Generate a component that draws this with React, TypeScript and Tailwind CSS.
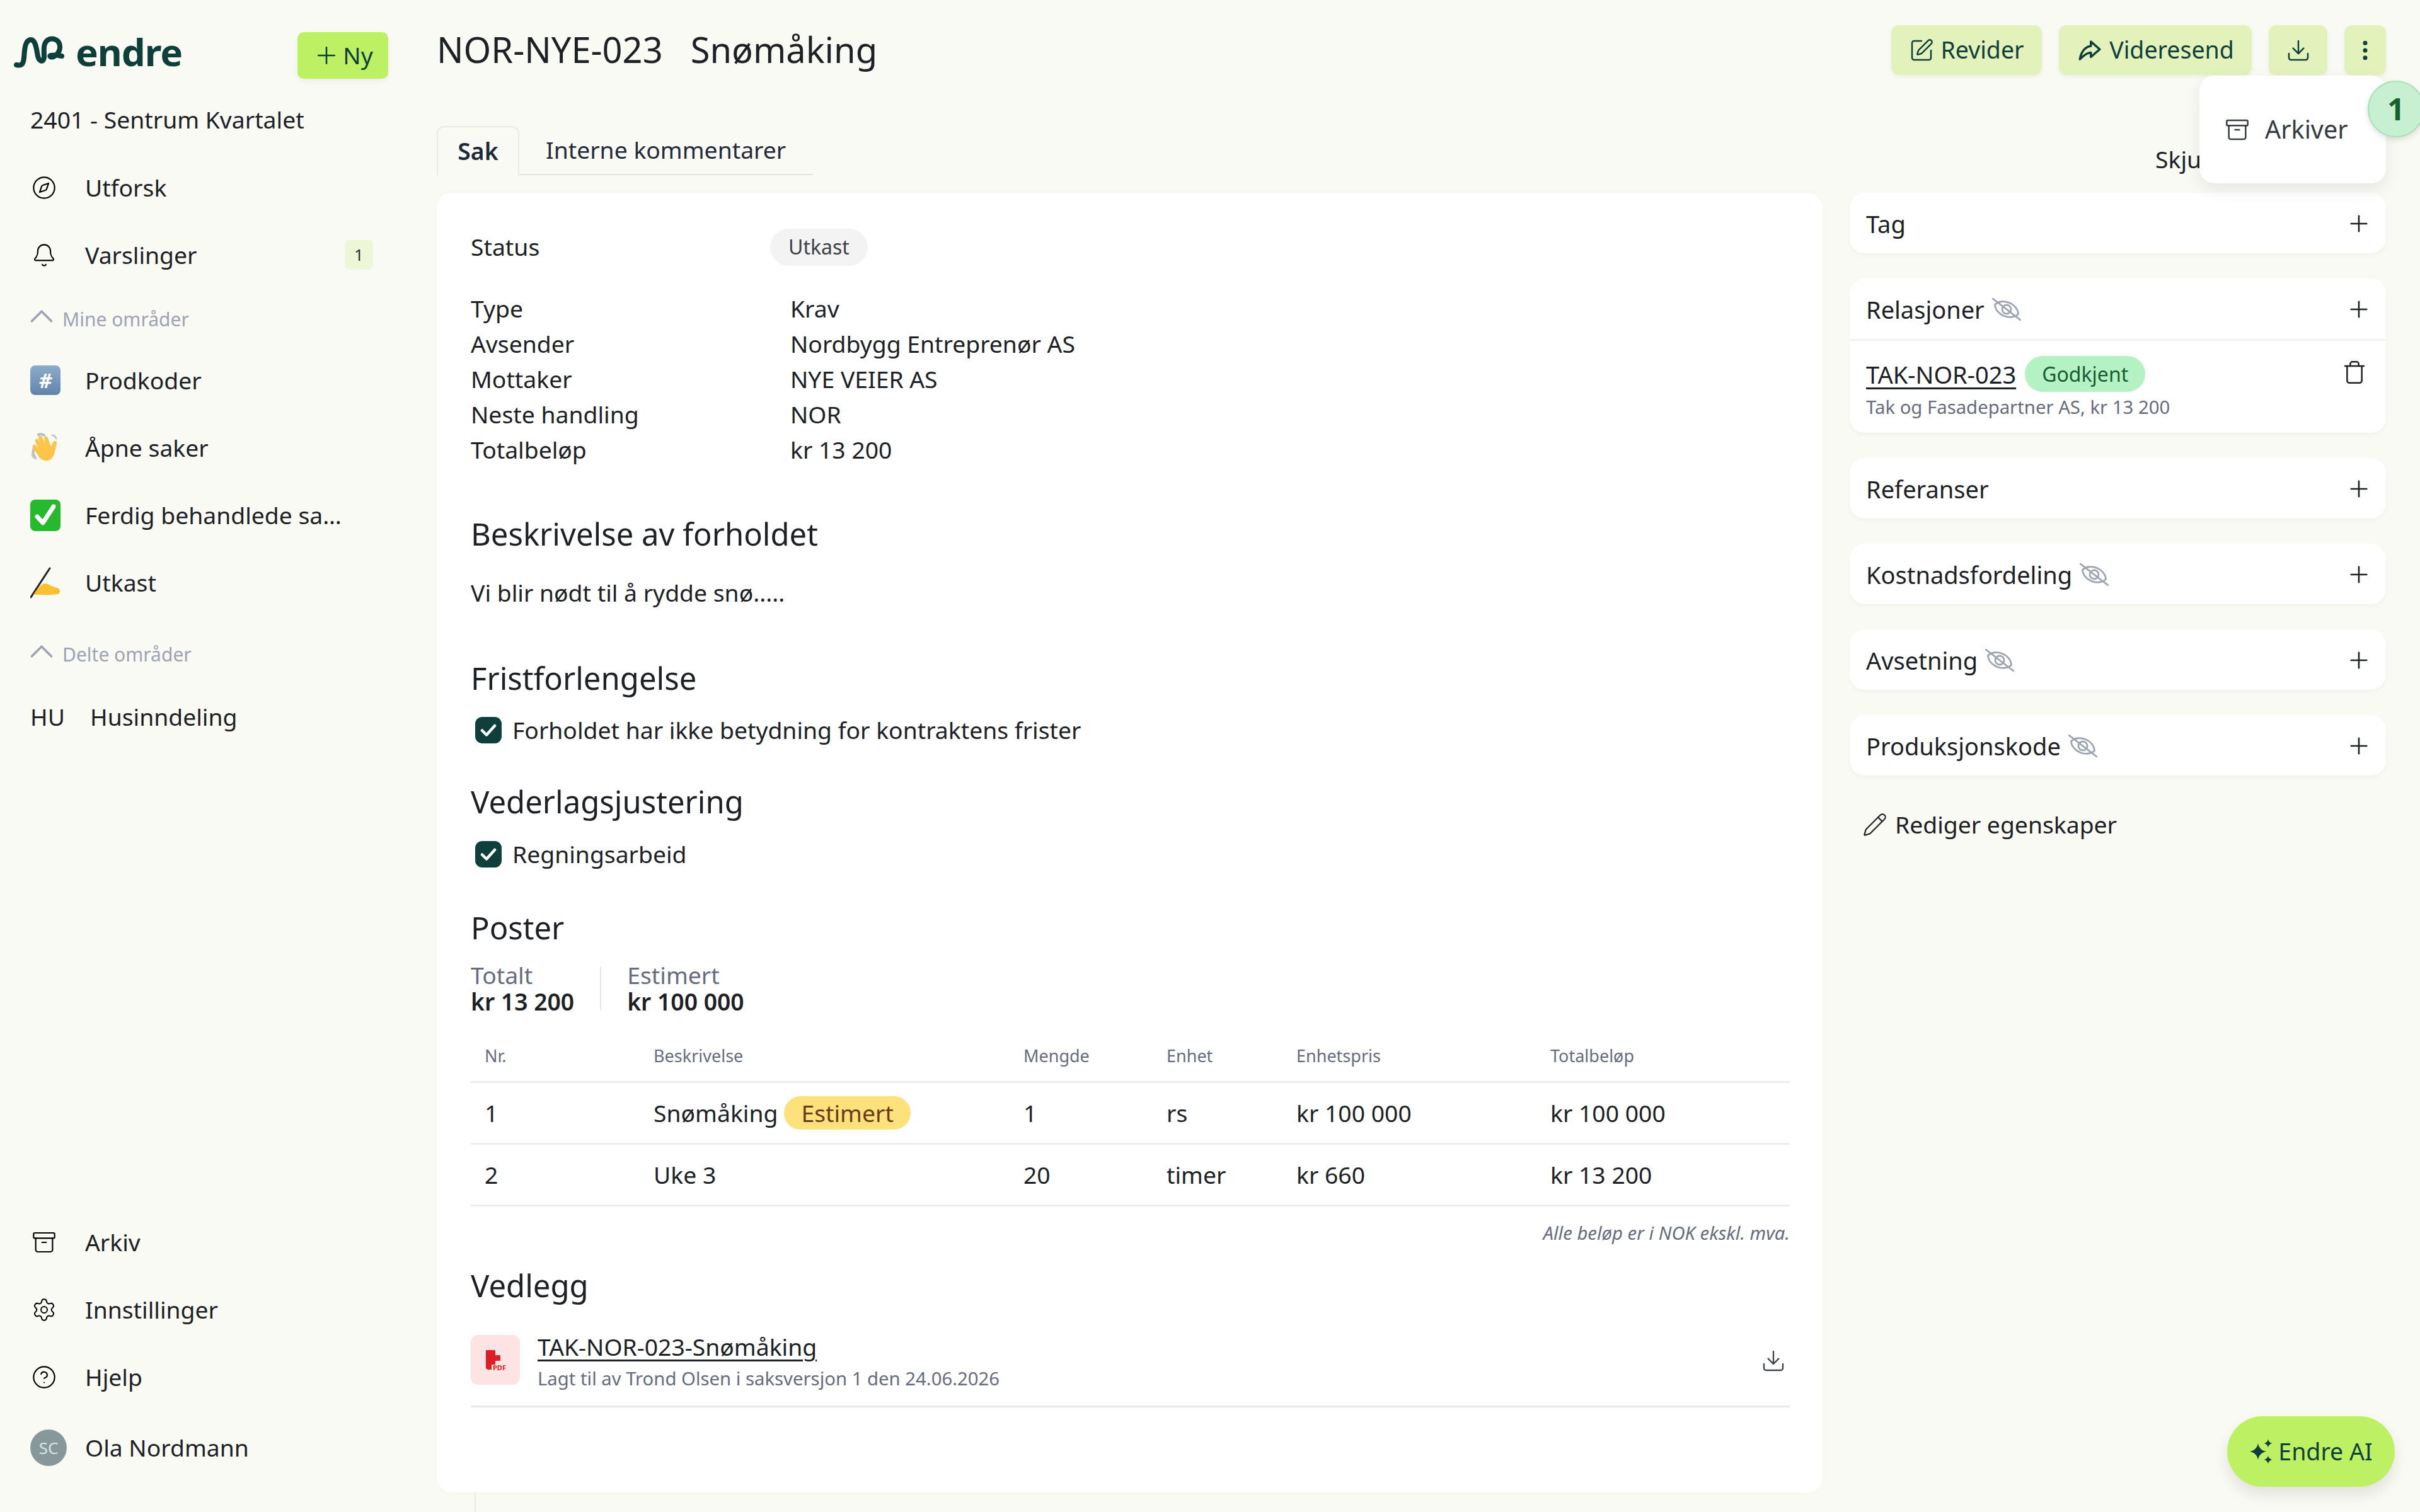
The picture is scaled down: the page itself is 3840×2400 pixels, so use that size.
import { Archive, Bell, ChevronUp, CircleHelp, Compass, Download, EllipsisVertical, Pencil, Plus, Settings, SquarePen, Trash } from "lucide-react";
import { TbShare3 } from "react-icons/tb";

const fontStack = "[font-family:'Noto_Sans',sans-serif]";

function Logo() {
  return (
    <div className="flex items-center gap-[18px] pl-[22px]">
      <svg width="80" height="56" viewBox="0 0 80 56" fill="none">
        <path
          d="M4 47C12 49 15 46 16 36C17 24 17 9 26 7C35 6 36 24 38 33C40 42 47 44 48 35C48 24 46 14 53 8C60 3 72 6 73 17C74 28 63 37 58 34C54 31 66 31 76 33"
          stroke="#0f3f3b"
          strokeWidth="8"
          strokeLinecap="round"
          strokeLinejoin="round"
        />
      </svg>
      <span className="-mt-[4px] text-[60px] leading-none font-bold tracking-[-1px] text-[#0f3f3b]">endre</span>
    </div>
  );
}

function HashEmoji() {
  return (
    <span className="flex h-[47px] w-[48px] items-center justify-center rounded-[8px] bg-gradient-to-b from-[#8daccb] to-[#5f84ac] text-[32px] leading-none font-bold italic text-white">
      #
    </span>
  );
}

function WaveEmoji() {
  return (
    <svg width="48" height="50" viewBox="0 0 48 50" fill="none">
      <path d="M6 26c-2 4-2 9 1 13M13 4c3-1 6-1 9 1" stroke="#b9bcc0" strokeWidth="4" strokeLinecap="round" />
      <path d="M35 5c3 0 5 2 6 5M3 36c1 3 3 5 6 6" stroke="#c4c7ca" strokeWidth="3" strokeLinecap="round" />
      <path
        d="M13 26 8 15c-1-4 3-6 5-3l3 6-3-8c-1-4 4-6 6-2l5 11-2-9c-1-4 4-5 6-1l5 14 3-7c2-4 7-2 6 2l-3 13c-2 10-8 16-16 14-6-1-9-5-12-10l-7-10c-2-4 3-7 6-3z"
        fill="#fcc44a"
      />
    </svg>
  );
}

function CheckEmoji() {
  return (
    <svg width="48" height="50" viewBox="0 0 48 50">
      <rect width="48" height="50" rx="8" fill="#27b92d" />
      <path d="M11 27 20 37 37 11" stroke="#fff" strokeWidth="7" fill="none" strokeLinecap="round" strokeLinejoin="round" />
    </svg>
  );
}

function WriteEmoji() {
  return (
    <svg width="48" height="50" viewBox="0 0 48 50" fill="none">
      <path d="M1 48 31 2" stroke="#222" strokeWidth="3" strokeLinecap="round" />
      <path d="M5 44c4-7 9-13 15-17 5-2 9 0 13 3 5 2 9 2 13 5 2 3 1 7-2 8-9 1-18 2-27 1-4 0-8 0-12 0z" fill="#fbc02d" />
    </svg>
  );
}

function HiddenIcon() {
  return (
    <svg width="46" height="36" viewBox="0 0 46 36" fill="none" stroke="#9ea5b0" strokeWidth="2.8" strokeLinecap="round">
      <g transform="rotate(22 23 18)">
        <path d="M3 18C10 3 36 3 43 18C36 33 10 33 3 18Z" />
        <circle cx="23" cy="18" r="7" />
      </g>
      <path d="M1 1 45 35" />
    </svg>
  );
}

function SidebarLink({ icon, label, badge }: { icon: React.ReactNode; label: string; badge?: string }) {
  return (
    <div className="flex h-[107px] items-center pl-[48px] pr-[101px]">
      <span className="flex w-[87px] shrink-0 items-center">{icon}</span>
      <span className="max-w-[409px] truncate text-[37.3px] leading-[54px] text-[#1d2126]">{label}</span>
      {badge && (
        <span className="ml-auto flex h-[47px] w-[45px] items-center justify-center rounded-[8px] bg-[#eef6d8] text-[26px] text-[#27302a]">
          {badge}
        </span>
      )}
    </div>
  );
}

function SectionLabel({ label }: { label: string }) {
  return (
    <div className="flex items-center gap-[2px] pl-[35px] text-[30px] leading-none text-[#9ea3b3]">
      <ChevronUp size={62} strokeWidth={1.4} className="-my-[10px] -mt-[20px]" />
      <span>{label}</span>
    </div>
  );
}

function Sidebar() {
  return (
    <aside className="flex w-[693px] shrink-0 flex-col">
      <div className="flex items-start justify-between pt-[51px] pr-[77px]">
        <div className="pt-[5px]"><Logo /></div>
        <button className="flex h-[74px] w-[144px] items-center justify-center gap-[4px] rounded-[10px] bg-[#bdf163] text-[37.3px] text-[#0f3f3b] shadow-[0_4px_10px_rgba(0,0,0,0.05)]">
          <Plus size={44} strokeWidth={1.4} />
          Ny
        </button>
      </div>
      <div className="mt-[38px] pl-[48px] text-[37.3px] leading-[54px] text-[#1d2126]">2401 - Sentrum Kvartalet</div>
      <div className="mt-[27px]">
        <SidebarLink icon={<Compass size={40} strokeWidth={1.3} className="ml-[2px]" />} label="Utforsk" />
        <SidebarLink icon={<Bell size={40} strokeWidth={1.3} className="ml-[2px]" />} label="Varslinger" badge="1" />
      </div>
      <div className="mt-[33px] h-[48px]">
        <SectionLabel label="Mine områder" />
      </div>
      <div className="mt-[11px]">
        <SidebarLink icon={<HashEmoji />} label="Prodkoder" />
        <SidebarLink icon={<WaveEmoji />} label="Åpne saker" />
        <SidebarLink icon={<CheckEmoji />} label="Ferdig behandlede saker" />
        <SidebarLink icon={<WriteEmoji />} label="Utkast" />
      </div>
      <div className="mt-[45px] h-[48px]">
        <SectionLabel label="Delte områder" />
      </div>
      <div className="mt-[28px] flex h-[78px] items-center pl-[48px] text-[37.3px] leading-none text-[#1d2126]">
        <span className="w-[95px]">HU</span>
        <span>Husinndeling</span>
      </div>
      <div className="mt-auto pb-[43px]">
        <SidebarLink icon={<Archive size={40} strokeWidth={1.3} className="ml-[2px]" />} label="Arkiv" />
        <SidebarLink icon={<Settings size={40} strokeWidth={1.2} className="ml-[2px]" />} label="Innstillinger" />
        <SidebarLink icon={<CircleHelp size={40} strokeWidth={1.3} className="ml-[2px]" />} label="Hjelp" />
        <div className="flex h-[118px] items-center pl-[48px]">
          <span className="flex h-[58px] w-[58px] items-center justify-center rounded-full bg-[#87989a] text-[26px] text-[#d9e2e2]">SC</span>
          <span className="ml-[29px] text-[37.3px] leading-none text-[#1d2126]">Ola Nordmann</span>
        </div>
      </div>
    </aside>
  );
}

function ActionButton({ children, className }: { children: React.ReactNode; className: string }) {
  return (
    <button className={`flex h-[79px] items-center justify-center gap-[10px] rounded-[12px] bg-[#e3f1ba] text-[37.5px] text-[#0f3f3b] shadow-[0_3px_8px_rgba(0,0,0,0.05)] ${className}`}>
      {children}
    </button>
  );
}

function InfoRow({ label, value }: { label: string; value: string }) {
  return (
    <div className="flex h-[56px] items-center text-[37.3px] leading-none text-[#1d2126]">
      <span className="w-[507px]">{label}</span>
      <span>{value}</span>
    </div>
  );
}

function SectionTitle({ children, className }: { children: React.ReactNode; className: string }) {
  return <h2 className={`text-[49px] leading-[66px] font-normal text-[#1d2126] ${className}`}>{children}</h2>;
}

function CheckRow({ label, className }: { label: string; className: string }) {
  return (
    <div className={`flex items-center gap-[24px] pl-[7px] text-[37.3px] leading-[52px] text-[#1d2126] ${className}`}>
      <svg width="42" height="42" viewBox="0 0 42 42" className="-mr-[7px]">
        <rect width="42" height="42" rx="11" fill="#0f3f3b" />
        <path d="M11 21.500 18 28.500 31 14" stroke="#fff" strokeWidth="4.5" fill="none" strokeLinecap="round" strokeLinejoin="round" />
      </svg>
      {label}
    </div>
  );
}

const itemRows = [
  { nr: "1", desc: "Snømåking", estimated: true, qty: "1", unit: "rs", price: "kr 100 000", total: "kr 100 000" },
  { nr: "2", desc: "Uke 3", estimated: false, qty: "20", unit: "timer", price: "kr 660", total: "kr 13 200" },
];

const gridCols = "grid grid-cols-[268px_587px_227px_206px_403px_1fr] pl-[22px]";

function ItemsTable() {
  return (
    <div className="mt-[42px]">
      <div className={`${gridCols} h-[66px] items-start border-b-[3px] border-[#edeeec] pt-[4px] text-[27px] leading-[38px] text-[#666c7d]`}>
        <span>Nr.</span>
        <span>Beskrivelse</span>
        <span>Mengde</span>
        <span>Enhet</span>
        <span>Enhetspris</span>
        <span>Totalbeløp</span>
      </div>
      {itemRows.map((row) => (
        <div key={row.nr} className={`${gridCols} h-[98px] items-center border-b-[3px] border-[#edeeec] text-[37.3px] leading-none text-[#1d2126]`}>
          <span>{row.nr}</span>
          <span className="flex items-center gap-[10px]">
            {row.desc}
            {row.estimated && (
              <span className="flex h-[53px] items-center rounded-full bg-[#fde27c] px-[27px] text-[#6a3a12]">Estimert</span>
            )}
          </span>
          <span>{row.qty}</span>
          <span>{row.unit}</span>
          <span>{row.price}</span>
          <span>{row.total}</span>
        </div>
      ))}
      <div className="mt-[24px] text-right text-[29.3px] leading-[36px] italic text-[#666c7d]">Alle beløp er i NOK ekskl. mva.</div>
    </div>
  );
}

function CaseCard() {
  return (
    <section className="h-[2063px] flex-1 rounded-[24px] bg-white pt-[56px] pr-[52px] pl-[54px] shadow-[0_0_12px_rgba(0,0,0,0.02)]">
      <div className="flex h-[60px] items-center text-[37.3px] leading-none text-[#1d2126]">
        <span className="w-[475px]">Status</span>
        <span className="flex h-[59px] items-center rounded-full bg-[#f3f3f3] px-[29px] text-[32px] text-[#3d4148]">Utkast</span>
      </div>
      <div className="mt-[40px]">
        <InfoRow label="Type" value="Krav" />
        <InfoRow label="Avsender" value="Nordbygg Entreprenør AS" />
        <InfoRow label="Mottaker" value="NYE VEIER AS" />
        <InfoRow label="Neste handling" value="NOR" />
        <InfoRow label="Totalbeløp" value="kr 13 200" />
      </div>
      <SectionTitle className="mt-[72px]">Beskrivelse av forholdet</SectionTitle>
      <p className="mt-[35px] text-[37.3px] leading-[52px] text-[#1d2126]">Vi blir nødt til å rydde snø.....</p>
      <SectionTitle className="mt-[76px]">Fristforlengelse</SectionTitle>
      <CheckRow className="mt-[24px]" label="Forholdet har ikke betydning for kontraktens frister" />
      <SectionTitle className="mt-[54px]">Vederlagsjustering</SectionTitle>
      <CheckRow className="mt-[25px]" label="Regningsarbeid" />
      <SectionTitle className="mt-[57px]">Poster</SectionTitle>
      <div className="mt-[22px] flex items-center text-[37.3px] leading-[42px]">
        <div className="pr-[41px]">
          <div className="text-[#666c7d]">Totalt</div>
          <div className="font-semibold text-[#1d2126]">kr 13 200</div>
        </div>
        <div className="h-[70px] w-[2px] bg-[#e7e8e6]" />
        <div className="pl-[41px]">
          <div className="text-[#666c7d]">Estimert</div>
          <div className="font-semibold text-[#1d2126]">kr 100 000</div>
        </div>
      </div>
      <ItemsTable />
      <SectionTitle className="mt-[32px]">Vedlegg</SectionTitle>
      <div className="mt-[46px] flex h-[115px] items-start border-b-[3px] border-[#e7e8e6]">
        <span className="flex h-[79px] w-[78px] items-center justify-center rounded-[12px] bg-[#fde3e3]">
          <svg width="36" height="36" viewBox="0 0 36 36" fill="#dc1f26">
            <path d="M3 2h14l9 9v8h-8v6h-6v8H7a4 4 0 0 1-4-4z" />
            <path d="M18 2v8h8z" fill="#fde3e3" />
            <text x="14" y="34" fontSize="11" fontWeight="700" fontFamily="Noto Sans">PDF</text>
          </svg>
        </span>
        <div className="ml-[28px] -mt-[5px] flex-1">
          <div className="text-[37.3px] leading-[48px] text-[#1d2126] underline decoration-[3px] underline-offset-[6px]">TAK-NOR-023-Snømåking</div>
          <div className="mt-[5px] text-[29.3px] leading-[42px] text-[#666c7d]">Lagt til av Trond Olsen i saksversjon 1 den 24.06.2026</div>
        </div>
        <Download size={40} strokeWidth={1.4} className="mt-[21px] mr-[6px] text-[#3b4149]" />
      </div>
    </section>
  );
}

function PropertyHeader({ label, hidden }: { label: string; hidden?: boolean }) {
  return (
    <div className="flex h-[96px] items-center pt-[1px] pr-[22px] pl-[26px] text-[38px] leading-none text-[#1d2126]">
      <span>{label}</span>
      {hidden && <span className="ml-[12px] flex"><HiddenIcon /></span>}
      <Plus size={42} strokeWidth={1.5} className="ml-auto" />
    </div>
  );
}

function PropertyCard({ label, hidden }: { label: string; hidden?: boolean }) {
  return (
    <div className="rounded-[24px] bg-white shadow-[0_3px_6px_rgba(0,0,0,0.04)]">
      <PropertyHeader label={label} hidden={hidden} />
    </div>
  );
}

function PropertiesPanel() {
  return (
    <aside className="flex w-[851px] shrink-0 flex-col gap-[40px]">
      <PropertyCard label="Tag" />
      <div className="rounded-[24px] bg-white shadow-[0_3px_6px_rgba(0,0,0,0.04)]">
        <PropertyHeader label="Relasjoner" hidden />
        <div className="relative h-[149px] border-t-[3px] border-[#f1f2f0] pt-[24px] pl-[26px]">
          <div className="flex items-center gap-[14px]">
            <span className="text-[38px] leading-none text-[#1d2126] underline decoration-[3px] underline-offset-[6px]">TAK-NOR-023</span>
            <span className="flex h-[57px] items-center rounded-full bg-[#b4f2c4] px-[27px] text-[32px] text-[#175c32]">Godkjent</span>
          </div>
          <div className="mt-[4px] text-[29.3px] leading-[40px] text-[#666c7d]">Tak og Fasadepartner AS, kr 13 200</div>
          <Trash size={40} strokeWidth={1.5} className="absolute top-[30px] right-[30px] text-[#1d2126]" />
        </div>
      </div>
      <PropertyCard label="Referanser" />
      <PropertyCard label="Kostnadsfordeling" hidden />
      <PropertyCard label="Avsetning" hidden />
      <PropertyCard label="Produksjonskode" hidden />
      <div className="mt-[12px] flex items-center gap-[12px] pl-[20px] text-[37.3px] leading-[52px] text-[#1d2126]">
        <Pencil size={40} strokeWidth={1.3} />
        Rediger egenskaper
      </div>
    </aside>
  );
}

export default function App() {
  return (
    <div className={`relative flex h-[2400px] w-[3840px] overflow-hidden bg-[#f9faf4] ${fontStack}`}>
      <Sidebar />
      <main className="flex min-w-0 flex-1 flex-col pr-[54px]">
        <header className="flex h-[200px] items-start justify-between">
          <h1 className="mt-[39px] flex gap-[44px] text-[56px] leading-[78px] font-normal text-[#1d2126]">
            <span>NOR-NYE-023</span>
            <span>Snømåking</span>
          </h1>
          <div className="mt-[40px] flex gap-[27px]">
            <ActionButton className="w-[239px]"><SquarePen size={40} strokeWidth={1.5} />Revider</ActionButton>
            <ActionButton className="w-[306px]"><TbShare3 size={42} />Videresend</ActionButton>
            <ActionButton className="w-[93px]"><Download size={40} strokeWidth={1.5} /></ActionButton>
            <ActionButton className="w-[66px]"><EllipsisVertical size={40} strokeWidth={2.2} /></ActionButton>
          </div>
        </header>
        <div className="flex items-start justify-between">
          <nav className="flex h-[78px] w-[597px] border-b-[2px] border-[#e3e4e1]">
            <span className="-mb-[2px] flex w-[131px] items-center justify-center rounded-t-[12px] border-x-[2px] border-t-[2px] border-[#e9eae7] bg-[#f9faf4] text-[37.3px] font-semibold text-[#1d2a38]">Sak</span>
            <span className="flex flex-1 items-center pl-[42px] text-[37.3px] text-[#242a3a]">Interne kommentarer</span>
          </nav>
          <span className="mt-[33px] mr-[-2px] w-[368px] text-[37.3px] leading-[40px] text-[#1d2126]">Skjul</span>
        </div>
        <div className="mt-[28px] flex items-start gap-[43px]">
          <CaseCard />
          <PropertiesPanel />
        </div>
      </main>

      {/* Menu open from the dots button */}
      <div className="absolute top-[120px] left-[3490px] flex h-[171px] w-[296px] items-center gap-[24px] rounded-[24px] bg-white pl-[40px] text-[39.5px] text-[#363b42] shadow-[0_10px_28px_rgba(0,0,0,0.08)]">
        <Archive size={40} strokeWidth={1.5} />
        Arkiver
      </div>
      <div className="absolute top-[128px] left-[3757px] flex h-[90px] w-[90px] items-center justify-center rounded-full border-[2px] border-[#a8e0b8] bg-[#c7f0d2] text-[48px] font-bold text-[#14622f] shadow-[0_4px_10px_rgba(0,0,0,0.12)]">
        1
      </div>

      <div className="absolute top-[2368px] left-[753px] h-[32px] w-[2px] bg-[#e9eae7]" />

      <button className="absolute top-[2248px] left-[3534px] flex h-[112px] w-[266px] items-center justify-center gap-[8px] rounded-full bg-[#bdf163] text-[37.5px] text-[#0f3f3b] shadow-[0_12px_24px_rgba(0,0,0,0.1)]">
        <svg width="38" height="40" viewBox="0 0 38 40" fill="#0f3f3b">
          <path d="M14 6.500C15 14 20 19 27.500 20C20 21 15 26 14 33.500C13 26 8 21 .5 20C8 19 13 14 14 6.500z" />
          <path d="M30 0C30.500 4 33 6.500 37 7C33 7.500 30.500 10 30 14C29.500 10 27 7.500 23 7C27 6.500 29.500 4 30 0z" />
          <path d="M30 26C30.500 30 33 32.500 37 33C33 33.500 30.500 36 30 40C29.500 36 27 33.500 23 33C27 32.500 29.500 30 30 26z" />
        </svg>
        Endre AI
      </button>
    </div>
  );
}
